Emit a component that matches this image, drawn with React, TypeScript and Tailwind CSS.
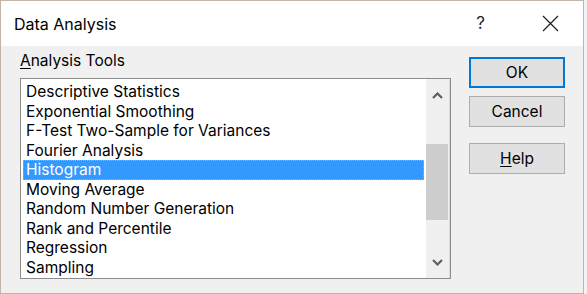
import React from 'react';

const tools = [
  'Descriptive Statistics',
  'Exponential Smoothing',
  'F-Test Two-Sample for Variances',
  'Fourier Analysis',
  'Histogram',
  'Moving Average',
  'Random Number Generation',
  'Rank and Percentile',
  'Regression',
  'Sampling',
];

const font = { fontFamily: 'Inter, "Noto Sans", sans-serif' };

const Chevron: React.FC<{ up?: boolean }> = ({ up }) => (
  <svg width="11" height="7" viewBox="0 0 11 7">
    <polyline
      points={up ? '1,6 5.5,1.5 10,6' : '1,1 5.5,5.5 10,1'}
      fill="none"
      stroke="#606060"
      strokeWidth="2.2"
    />
  </svg>
);

const DialogButton: React.FC<{ children: React.ReactNode; primary?: boolean; className?: string }> = ({
  children,
  primary,
  className = '',
}) => (
  <button
    className={`w-[96px] h-[31px] flex items-center justify-center bg-[#e1e1e1] text-[15.5px] text-black ${
      primary ? 'border-2 border-[#0078d7]' : 'border border-[#adadad]'
    } ${className}`}
  >
    {children}
  </button>
);

export default function App() {
  return (
    <div className="w-[587px] h-[294px] bg-[#f3f3f3]" style={font}>
      <div className="w-[584px] h-[294px] flex flex-col border border-[#c2b4a6] bg-[#f0f0f0]">
        {/* title bar */}
        <div className="h-[45px] bg-white flex items-center pl-[13px] pr-[24px] shrink-0">
          <span className="text-[16px] text-black">Data Analysis</span>
          <span className="ml-auto text-[17px] text-[#222] mr-[57px]">?</span>
          <svg width="17" height="17" viewBox="0 0 17 17">
            <path d="M1 1 L16 16 M16 1 L1 16" stroke="#222" strokeWidth="1.3" fill="none" />
          </svg>
        </div>

        <div className="flex flex-1 pl-[19px]">
          <div className="flex flex-col pt-[5px]">
            <div className="h-[20px] leading-[20px] text-[15.5px] text-black mb-[7px]">
              <span className="underline underline-offset-2">A</span>nalysis Tools
            </div>
            <div className="w-[431px] h-[201px] flex border border-[#8c8c8c] bg-white">
              <div className="flex-1 px-[2px] pt-[3px]">
                {tools.map((t) => (
                  <div
                    key={t}
                    className={`h-[19.5px] leading-[19.5px] text-[15.5px] pl-[3px] whitespace-nowrap ${
                      t === 'Histogram'
                        ? 'bg-[#3399ff] text-white outline-1 outline-dotted -outline-offset-1 outline-[#e0a060]'
                        : 'text-black'
                    }`}
                  >
                    {t}
                  </div>
                ))}
              </div>
              <div className="w-[24px] bg-[#f0f0f0] flex flex-col border-r border-[#dcdcdc]">
                <div className="h-[32px] flex items-center justify-center">
                  <Chevron up />
                </div>
                <div className="mt-[33px] h-[76px] mr-[1px] bg-[#cdcdcd]" />
                <div className="flex-1" />
                <div className="h-[32px] flex items-center justify-center">
                  <Chevron />
                </div>
              </div>
            </div>
          </div>

          <div className="flex flex-col pt-[11px] ml-[18px]">
            <DialogButton primary>OK</DialogButton>
            <DialogButton className="mt-[8px]">Cancel</DialogButton>
            <DialogButton className="mt-[16px]">
              <span>
                <span className="underline underline-offset-2">H</span>elp
              </span>
            </DialogButton>
          </div>
        </div>
      </div>
    </div>
  );
}
